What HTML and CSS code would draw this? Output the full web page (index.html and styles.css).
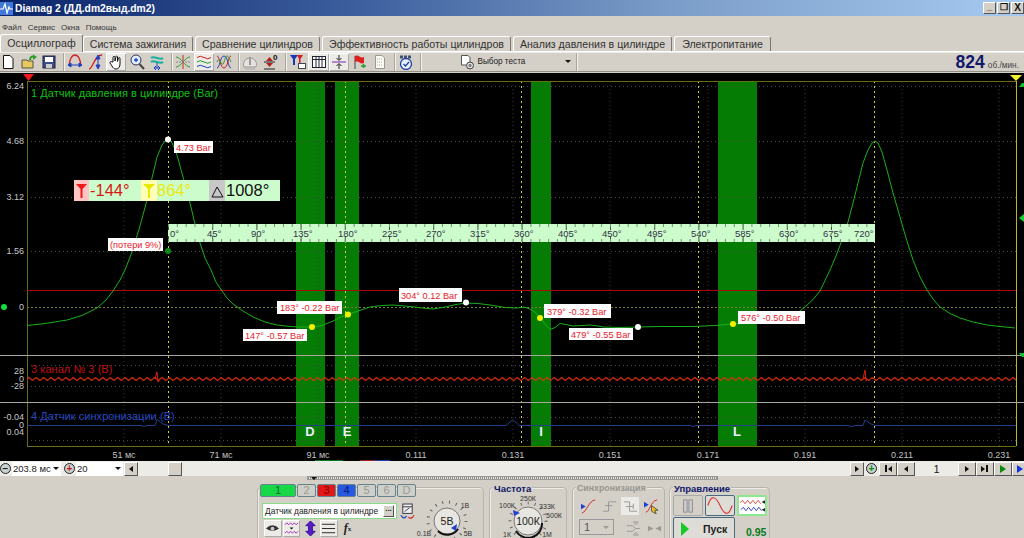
FILE: index.html
```html
<!DOCTYPE html>
<html lang="ru">
<head>
<meta charset="utf-8">
<title>Diamag 2</title>
<link rel="stylesheet" href="styles.css">
</head>
<body>
<div class="app">
  <header class="titlebar">
    <svg class="appicon" viewBox="0 0 13 13"><rect width="13" height="13" fill="#3f78d8"/><path d="M0 7H3L5 2 7 11 9 5 10 7H13" fill="none" stroke="#fff" stroke-width="1.2"/></svg>
    <span class="apptitle">Diamag 2 (ДД.dm2выд.dm2)</span>
    <div class="winbtns">
      <span class="winbtn">_</span><span class="winbtn">&#x2750;</span><span class="winbtn winx">X</span>
    </div>
  </header>
  <nav class="menubar"><span>Файл</span><span>Сервис</span><span>Окна</span><span>Помощь</span></nav>
  <div class="tabs">
    <span class="tab active t1">Осциллограф</span>
    <span class="tab t2">Система зажигания</span>
    <span class="tab t3">Сравнение цилиндров</span>
    <span class="tab t4">Эффективность работы цилиндров</span>
    <span class="tab t5">Анализ давления в цилиндре</span>
    <span class="tab t6">Электропитание</span>
  </div>
  <div class="toolbar">
    <span class="tb first"><svg viewBox="0 0 16 16"><path d="M3.500 1.500H10L13 4.500V14.500H3.500Z" fill="#fff" stroke="#111"/></svg></span>
    <span class="tb"><svg viewBox="0 0 16 16"><path d="M1 14V6H6L7 7H12V14Z" fill="#e8c860" stroke="#554"/><path d="M9 6C9 3 11 2 13 3" fill="none" stroke="#2a9a2a" stroke-width="2"/><path d="M12 .5L16 3 12 6Z" fill="#2a9a2a"/></svg></span>
    <span class="tb"><svg viewBox="0 0 16 16"><rect x="2" y="2" width="12" height="12" fill="#3a4a8a" stroke="#223"/><rect x="4" y="3" width="8" height="5" fill="#fff"/><rect x="5" y="10" width="6" height="4" fill="#ccc"/></svg></span>
    <i class="sep"></i>
    <span class="tb"><svg viewBox="0 0 16 16"><path d="M2 12C3 3 6 1 8 1S13 3 14 12" fill="none" stroke="#d02020" stroke-width="1.300"/><path d="M1 11H15M1 11L4 9V13ZM15 11L12 9V13Z" stroke="#2040c0" fill="#2040c0"/></svg></span>
    <span class="tb"><svg viewBox="0 0 16 16"><path d="M1 15C5 15 6 1 14 1" fill="none" stroke="#d02020" stroke-width="1.300"/><path d="M10 2V14M10 1L8 5H12ZM10 15L8 11H12Z" stroke="#2040c0" fill="#2040c0"/></svg></span>
    <span class="tb on"><svg viewBox="0 0 16 16"><path d="M5 8V3.500C5 2 7 2 7 3.500V7L8 2.500C8.500 1.500 9.500 2 9.500 3V7.500L10.500 4C11 3 12 3.500 12 4.500V10C12 13 10.500 15 8 15 6 15 5 14 4 12L2 9C1.500 8 3 7 4 8Z" fill="#fff" stroke="#111"/></svg></span>
    <span class="tb"><svg viewBox="0 0 16 16"><circle cx="7" cy="6" r="5" fill="#dfeeff" stroke="#335"/><path d="M5 6H9M7 4V8" stroke="#2040c0" stroke-width="1.300"/><path d="M10.500 10L15 15" stroke="#444" stroke-width="2"/></svg></span>
    <span class="tb"><svg viewBox="0 0 16 16"><path d="M2 4C5 1 11 7 14 4M2 8C5 5 11 11 14 8" fill="none" stroke="#18b0a0" stroke-width="2"/><path d="M8 9V14M5 14H11M5 14L7 12M5 14L7 16M11 14L9 12M11 14L9 16" stroke="#2040c0" fill="none"/></svg></span>
    <i class="sep"></i>
    <span class="tb"><svg viewBox="0 0 16 16"><path d="M1 3C6 3 10 13 15 13M1 13C6 13 10 3 15 3" fill="none" stroke="#2a9a2a"/><path d="M8 1V15" stroke="#c03020"/><path d="M1 8H15" stroke="#888" stroke-dasharray="2 1"/></svg></span>
    <span class="tb on"><svg viewBox="0 0 16 16"><path d="M1 3.500Q4 1 8 3.500T15 3.500" fill="none" stroke="#d02020"/><path d="M1 8Q4 5.500 8 8T15 8" fill="none" stroke="#2a9a2a"/><path d="M1 12.500Q4 10 8 12.500T15 12.500" fill="none" stroke="#2040c0"/></svg></span>
    <span class="tb"><svg viewBox="0 0 16 16"><path d="M1 14C4 14 4 2 8 2S12 14 15 14" fill="none" stroke="#2040c0"/><path d="M1 2C4 2 4 14 8 14S12 2 15 2" fill="none" stroke="#d02020"/><path d="M1 8C4 0 6 16 8 8S12 0 15 8" fill="none" stroke="#2a9a2a"/></svg></span>
    <i class="sep"></i>
    <span class="tb dim"><svg viewBox="0 0 16 16"><path d="M2 13A6.500 6.500 0 1 1 14 13Z" fill="#e4e2dc" stroke="#999"/><path d="M8 3V11" stroke="#999" stroke-width="2"/><path d="M3 15H13" stroke="#aaa"/></svg></span>
    <span class="tb"><svg viewBox="0 0 16 16"><path d="M1 8H12" stroke="#222"/><path d="M3 7L6.500 3 10 7ZM3 9H10L6.500 13Z" fill="#b02020"/><path d="M1 15H12" stroke="#222"/><text class="tbzero" x="10" y="6">0</text></svg></span>
    <i class="sep sepwide"></i>
    <span class="tb"><svg viewBox="0 0 16 16"><path d="M0 1H8L5 5V11H3V5Z" fill="#1838b8"/><path d="M7 1H13L10.500 5V9H9V5Z" fill="#d02020"/><rect x="8.500" y="9.500" width="7" height="5" fill="#fff" stroke="#445"/></svg></span>
    <span class="tb on"><svg viewBox="0 0 16 16"><rect x="1.500" y="2.500" width="13" height="11" fill="#fff" stroke="#223"/><path d="M1.500 5.500H14.500M5 2.500V13.500M8 2.500V13.500M11 2.500V13.500" stroke="#223"/></svg></span>
    <span class="tb on"><svg viewBox="0 0 16 16"><path d="M1 8H15" stroke="#8020b0"/><path d="M8 1V6M5.500 4L8 6.500 10.500 4M5.500 12L8 9.500 10.500 12M8 10V15" stroke="#222" fill="none"/></svg></span>
    <span class="tb"><svg viewBox="0 0 16 16"><path d="M4 2V15" stroke="#444"/><path d="M4 2C8 0 9 5 13 3V9C9 11 8 6 4 8Z" fill="#e02020"/><path d="M10 12H15M12.500 10V14" stroke="#2a9a2a" stroke-width="1.500"/></svg></span>
    <span class="tb dimdoc"><svg viewBox="0 0 16 16"><path d="M3.500 1.500H10L12.500 4V14.500H3.500Z" fill="#fbfbf4" stroke="#999"/><path d="M5 5H10M5 8H11M5 11H10" stroke="#aaa" stroke-dasharray="1 1"/></svg></span>
    <i class="sep"></i>
    <span class="tb"><svg viewBox="0 0 16 16"><circle cx="8" cy="10" r="5.500" fill="#e6f0ff" stroke="#2040a0" stroke-width="1.300"/><path d="M5.500 10L7.500 12 11 8" fill="none" stroke="#2040a0" stroke-width="1.300"/><path d="M2 3H14" stroke="#405070" stroke-width="3" stroke-dasharray="3 1"/></svg></span>
    <i class="sep"></i>
    <div class="testsel">
      <svg class="docgear" viewBox="0 0 16 16"><path d="M2.500 1.500H9L11 3.500V11H2.500Z" fill="#fff" stroke="#555"/><circle cx="11" cy="11.500" r="3.500" fill="#ddd" stroke="#444"/><circle cx="11" cy="11.500" r="1" fill="#fff" stroke="#444"/></svg>
      <span>Выбор теста</span>
      <i class="caret"></i>
    </div>
    <i class="sep"></i>
    <div class="rpm"><b>824</b><span>об./мин.</span></div>
  </div>

  <svg class="plot" viewBox="0 73 1024 388" aria-label="Осциллограмма">
    <defs>
      <pattern id="zig" patternUnits="userSpaceOnUse" x="27" y="376" width="7.400" height="6">
        <path d="M0 3 1.800 1.500 3.700 3 5.500 4.500 7.400 3" fill="none" stroke="#e03010"/>
      </pattern>
    </defs>
    <rect x="0" y="73" width="1024" height="388" fill="#000"/>

    <rect class="zone" x="296" y="81" width="29" height="365"/>
    <rect class="zone" x="335" y="81" width="24" height="365"/>
    <rect class="zone" x="531" y="81" width="20" height="365"/>
    <rect class="zone" x="718" y="81" width="39" height="365"/>

    <path class="gridv" d="M124 81V446M221 81V446M318 81V446M416 81V446M513 81V446M610 81V446M708 81V446M805 81V446M902 81V446M999 81V446"/>
    <path class="gridh" d="M27 86.500H1016M27 141.500H1016M27 197.500H1016M27 251.500H1016M27 365.500H1016M27 386.500H1016M27 417.500H1016M27 440.500H1016"/>
    <path class="gridz" d="M27 307.500H1016"/>
    <path class="cursor" d="M168.500 81V446M345.500 81V446M521.500 81V446M698.500 81V446M874.500 81V446"/>

    <path class="frame" d="M27.500 81V446M27 81.500H1016M27 446.500H1016"/>
    <path class="frame-r" d="M1016.500 81V446"/>
    <path class="redline" d="M27 290.500H1016"/>
    <path class="sepline" d="M0 355.500H1024M0 402.500H1024"/>

    <rect x="27" y="376" width="989" height="6" fill="url(#zig)"/>
    <path class="redtrace" d="M155 379 157 372 158 382 160 379M863 379 865 370 866 381 868 379"/>
    <path class="bluetrace" d="M27 425.500H141L144 426.500 147 425.500H155L157 419.500 163 424 168 425.500H506L513 419.500 519 425.500H690L693 426.500 696 425.500H848L851 426.500 856 425.500H863L865 420 871 424 875 425.500H1016"/>
    <polyline class="curve" points="27,325.500 45,323.500 67,320 82,315.500 97,308 106,300 113,291 120,280 125,270 132,252 140,226 147,200 152,178 157,157 162,145 165,141 168,139.500 171,141 174,147 177,155 183,177 190,203 195,224 200,243 205,258 211,270 216,282 222,291 227,298 233,304 243,311 253,317 265,322 277,325 290,326.500 300,327 312,327 322,325.500 333,321 341,317 348,314.500 358,311 370,307 382,305.500 393,305 410,306.500 422,308 433,309 445,307 456,304.500 466,303 478,303.500 490,305 505,307.500 517,308 524,307 530,309 535,312 540,318 545,324 550,329.500 555,327.500 560,323.500 566,324.500 573,326 582,325.500 590,325 598,326 603,327 620,327.500 638,327 660,326.500 693,326.500 715,325.500 733,324 757,322.500 775,320 790,316 800,311 806,306 813,299.500 820,291 830,270 836,256 842,240 848,222 853,203 858,183 863,163 868,150 872,143 875,141 878,143 882,152 887,170 893,193 900,217 906,238 913,260 920,277 927,290 933,299 940,307 950,313.500 960,318 973,322 987,325 1000,326.500 1015,328"/>

    <rect class="strip" x="168" y="224" width="707" height="18"/>
    <path class="stripmaj" d="M168.500 224V230M168.500 236V242M212.700 224V230M212.700 236V242M256.900 224V230M256.900 236V242M301.100 224V230M301.100 236V242M345.300 224V230M345.300 236V242M389.500 224V230M389.500 236V242M433.700 224V230M433.700 236V242M477.900 224V230M477.900 236V242M522.100 224V230M522.100 236V242M566.300 224V230M566.300 236V242M610.500 224V230M610.500 236V242M654.700 224V230M654.700 236V242M698.900 224V230M698.900 236V242M743.100 224V230M743.100 236V242M787.300 224V230M787.300 236V242M831.500 224V230M831.500 236V242"/>
    <path class="stripmin" d="M168 225.500H875M168 240.500H875"/>
    <g class="striptext">
      <text x="170" y="236.500">0°</text>
      <text x="207" y="236.500">45°</text>
      <text x="251" y="236.500">90°</text>
      <text x="293" y="236.500">135°</text>
      <text x="338" y="236.500">180°</text>
      <text x="382" y="236.500">225°</text>
      <text x="426" y="236.500">270°</text>
      <text x="470" y="236.500">315°</text>
      <text x="514" y="236.500">360°</text>
      <text x="558" y="236.500">405°</text>
      <text x="602" y="236.500">450°</text>
      <text x="647" y="236.500">495°</text>
      <text x="691" y="236.500">540°</text>
      <text x="735" y="236.500">585°</text>
      <text x="779" y="236.500">630°</text>
      <text x="823" y="236.500">675°</text>
      <text x="854" y="236.500">720°</text>
    </g>

    <rect class="strip2" x="74" y="180" width="206" height="21"/>
    <rect x="74" y="180" width="15" height="21" fill="#ffc4c4"/>
    <path d="M76 184H87L82.500 189V198H80.500V189Z" fill="#f01818"/>
    <text class="dbig dred" x="90" y="196">-144°</text>
    <rect x="141" y="180" width="16" height="21" fill="#ffffb8"/>
    <path d="M143 184H155L150 189V198H148V189Z" fill="#e8e800"/>
    <text class="dbig dyel" x="157" y="196">864°</text>
    <rect x="209" y="180" width="16" height="21" fill="#c8c8c8"/>
    <path d="M217 187 223 197H212Z" fill="none" stroke="#111"/>
    <text class="dbig" x="226" y="196">1008°</text>

    <g class="lbls">
      <rect x="174" y="141" width="39" height="12"/><text x="176" y="150.500">4.73 Bar</text>
      <rect x="108" y="238" width="55" height="13"/><text x="110" y="248">(потери 9%)</text>
      <rect x="277" y="301" width="65" height="13"/><text x="280" y="311">183° -0.22 Bar</text>
      <rect x="243" y="329" width="64" height="12"/><text x="245" y="338.500">147° -0.57 Bar</text>
      <rect x="399" y="288" width="63" height="14"/><text x="401" y="298.500">304° 0.12 Bar</text>
      <rect x="544" y="304" width="67" height="14"/><text x="547" y="314.500">379° -0.32 Bar</text>
      <rect x="569" y="328" width="64" height="12"/><text x="571" y="337.500">479° -0.55 Bar</text>
      <rect x="738" y="311" width="67" height="13"/><text x="741" y="321">576° -0.50 Bar</text>
    </g>

    <circle class="pw" cx="168" cy="139.500" r="3"/>
    <circle cx="168" cy="251" r="3" fill="#0a8a1a"/>
    <circle class="py" cx="312" cy="327" r="3"/>
    <circle class="py" cx="348" cy="314.500" r="3"/>
    <circle class="pw" cx="466" cy="302.500" r="3"/>
    <circle class="py" cx="540" cy="318" r="3"/>
    <circle class="pw" cx="638" cy="327" r="3"/>
    <circle class="py" cx="733" cy="324" r="3"/>

    <text class="ch ch1" x="31" y="97">1 Датчик давления в цилиндре (Bar)</text>
    <text class="ch ch3" x="31" y="373">3 канал № 3 (В)</text>
    <text class="ch ch4" x="31" y="420">4 Датчик синхронизации (В)</text>

    <g class="yax">
      <text x="24" y="89">6.24</text><text x="24" y="144">4.68</text><text x="24" y="200">3.12</text><text x="24" y="254">1.56</text><text x="24" y="310">0</text>
      <text x="24" y="374">28</text><text x="24" y="382">0</text><text x="24" y="389">-28</text>
      <text x="24" y="420">-0.04</text><text x="24" y="428">0</text><text x="24" y="435">0.04</text>
    </g>
    <g class="xax">
      <text x="124" y="458">51 мс</text><text x="221" y="458">71 мс</text><text x="318" y="458">91 мс</text><text x="416" y="458">0.111</text><text x="513" y="458">0.131</text><text x="610" y="458">0.151</text><text x="708" y="458">0.171</text><text x="805" y="458">0.191</text><text x="902" y="458">0.211</text><text x="999" y="458">0.231</text>
    </g>
    <g class="zl">
      <text x="310" y="436">D</text><text x="347" y="436">E</text><text x="541" y="436">I</text><text x="737" y="436">L</text>
    </g>

    <path d="M23 74H34L28.500 81Z" fill="#f01818"/>
    <path d="M1010 75H1022L1016 81Z" fill="#f0f030"/>
    <circle cx="4" cy="307" r="3" fill="#10e040"/>
    <path d="M1019 87 1022 83 1024 83V87Z" fill="#10c030"/>
    <path d="M1019 218 1024 214V222Z" fill="#10d030"/>
    <path d="M1019 353H1024V357L1022 357Z" fill="#10c030"/>
    <path d="M315 460.500H343" stroke="#0a7a1a"/>
    <path d="M360 460.500H375" stroke="#a02020"/>
    <path d="M375 460.500H390" stroke="#2040a0"/>
  </svg>

  <div class="scrollrow">
    <span class="circ">&#8722;</span>
    <span class="combo c1">203.8 мс<i class="caret"></i></span>
    <span class="circ plus">+</span>
    <span class="combo c2">20<i class="caret"></i></span>
    <span class="sb sbl"><i class="tri-l"></i></span>
    <div class="track"><span class="thumb"></span></div>
    <span class="sb"><i class="tri-r"></i></span>
    <span class="circ plusg">+</span>
    <span class="nav"><i class="bar"></i><i class="tri-l"></i></span>
    <span class="nav"><i class="tri-l"></i></span>
    <span class="pageno">1</span>
    <span class="nav"><i class="tri-r"></i></span>
    <span class="nav"><i class="tri-r"></i><i class="bar"></i></span>
    <span class="nav"><i class="tri-r tgreen"></i></span>
    <span class="nav navlast"><i class="tri-r tblue"></i></span>
  </div>

  <div class="panel">
    <div class="splitter"><i class="caret"></i></div>
    <div class="groups">
      <section class="group g1">
        <div class="g1col">
          <div class="chbtns">
            <span class="chb cgreen">1</span><span class="chb">2</span><span class="chb cred">3</span><span class="chb cblue">4</span><span class="chb">5</span><span class="chb">6</span><span class="chb">D</span>
          </div>
          <div class="namerow">
            <div class="namefield"><span>Датчик давления в цилиндре</span><b class="dots">...</b></div>
            <svg class="swap" viewBox="0 0 16 18"><rect x="3" y="1" width="10" height="10" fill="#eee" stroke="#334"/><path d="M3 4H13M5 9L10 5" stroke="#334"/><path d="M1 13Q4 18 7 14" fill="none" stroke="#2040c0" stroke-width="1.300"/><path d="M15 13Q12 18 9 15" fill="none" stroke="#d02020" stroke-width="1.300"/></svg>
          </div>
          <div class="chtools">
            <span class="ct on"><svg viewBox="0 0 16 16"><path d="M1 8Q8 1 15 8 8 13 1 8Z" fill="#333"/><circle cx="8" cy="8" r="2" fill="#ccc"/></svg></span>
            <span class="ct on"><svg viewBox="0 0 16 16"><path d="M1 4 3 2 5 4 7 2 9 4 11 2 13 4 15 2M1 13 3 11 5 13 7 11 9 13 11 11 13 13 15 11" fill="none" stroke="#a020c0"/><path d="M6 7H10L8 9Z" fill="#111"/></svg></span>
            <span class="ct"><svg viewBox="0 0 16 16"><path d="M8 0 13 5H10V11H13L8 16 3 11H6V5H3Z" fill="#6018c0" stroke="#20109a"/></svg></span>
            <span class="ct on"><svg viewBox="0 0 16 16"><path d="M1 3.500H15M1 8H15M1 12.500H15" stroke="#222"/></svg></span>
            <span class="ct fx"><em>f</em><small>x</small></span>
          </div>
        </div>
        <svg class="knob kv" viewBox="0 0 70 50">
          <circle class="kticks" cx="35" cy="22" r="19"/>
          <circle class="kdial" cx="35" cy="22" r="13"/>
          <path d="M26 32A13 13 0 0 0 46 30" fill="none" stroke="#111" stroke-width="2"/>
          <path d="M39 29 45 25 44 32Z" fill="#2040d0"/>
          <text class="ktext" x="35" y="26">5В</text>
          <text class="ksmall" x="53" y="9">1В</text>
          <text class="ksmall" x="56" y="37">5В</text>
          <text class="ksmall" x="12" y="37">0.1В</text>
        </svg>
      </section>
      <section class="group g2">
        <h3 class="gt">Частота</h3>
        <svg class="knob kf" viewBox="0 0 76 50">
          <circle class="kticks" cx="37" cy="27" r="18"/>
          <circle class="kdial" cx="37" cy="27" r="14"/>
          <path d="M25 37A14 14 0 0 0 51 29" fill="none" stroke="#111" stroke-width="2"/>
          <path d="M22 16 29 19 23 22Z" fill="#2040d0"/>
          <text class="ktext" x="37" y="31">100К</text>
          <text class="ksmall" x="16" y="14">100К</text>
          <text class="ksmall" x="37" y="7">250К</text>
          <text class="ksmall" x="56" y="15">333К</text>
          <text class="ksmall" x="63" y="24">500К</text>
          <text class="ksmall" x="16" y="43">1К</text>
          <text class="ksmall" x="56" y="43">1М</text>
        </svg>
      </section>
      <section class="group g3">
        <h3 class="gt gdim">Синхронизация</h3>
        <div class="syncrow">
          <span class="sy"><svg viewBox="0 0 16 16"><path d="M1 15C6 14 8 2 15 1" fill="none" stroke="#d02020"/><path d="M0 5 5 8 0 11Z" fill="#2040d0"/></svg></span>
          <span class="sy"><svg viewBox="0 0 16 16"><path d="M1 13H7V3H15M3 7H11M7 4V11" fill="none" stroke="#999"/></svg></span>
          <span class="sy syon"><svg viewBox="0 0 16 16"><path d="M1 3H7V13H15M3 8H11M11 5V11" fill="none" stroke="#999"/></svg></span>
          <span class="sy"><svg viewBox="0 0 16 16"><path d="M2 14C6 14 7 2 14 1" fill="none" stroke="#d02020"/><path d="M0 3 5 6 0 9Z" fill="#2040d0"/><path d="M8 7 15 12 11.500 12 13 16 8 13Z" fill="#f0c020" stroke="#554"/></svg></span>
        </div>
        <div class="syncrow sr2">
          <span class="dimsel">1<i class="caret"></i></span>
          <span class="sy"><svg viewBox="0 0 16 16"><path d="M1 5H7L10 8H15M1 11H7L10 8M8 1H13L10.500 4ZM8 15H13L10.500 12Z" fill="none" stroke="#999"/></svg></span>
          <span class="sy"><svg viewBox="0 0 16 16"><path d="M1 5 7 8 1 11ZM15 5 9 8 15 11Z" fill="#999"/></svg></span>
        </div>
      </section>
      <section class="group g4">
        <h3 class="gt">Управление</h3>
        <div class="ctlrow">
          <span class="cbtn"><svg viewBox="0 0 16 16"><rect x="3" y="1" width="4" height="14" fill="#ccc" stroke="#888"/><rect x="9" y="1" width="4" height="14" fill="#ccc" stroke="#888"/></svg></span>
          <span class="cbtn cbon"><svg viewBox="0 0 30 18" class="sine"><path d="M1 9C5 -4 10 -2 15 9S25 22 29 9" fill="none" stroke="#d83838" stroke-width="1.300"/></svg></span>
          <span class="cbtn cbw"><svg viewBox="0 0 30 18" class="sine"><path d="M1 6 4 3 7 7 10 3 13 7 16 3 19 7 22 3 25 7" fill="none" stroke="#d83838"/><path d="M2 14 5 11 8 15 11 11 14 15 17 11 20 15 23 11 26 15" fill="none" stroke="#2030c0"/><path d="M30 3V7L26 5ZM30 12V16L26 14Z" fill="#223"/></svg></span>
        </div>
        <div class="ctlrow cr2">
          <span class="run"><i class="playi"></i><b>Пуск</b></span>
          <b class="val">0.95</b>
        </div>
      </section>
    </div>
  </div>
</div>
</body>
</html>
```

FILE: styles.css
```css
* { box-sizing: border-box; }
html, body { margin: 0; padding: 0; background: #d4d0c8; }
body { font-family: "Liberation Sans", Arial, sans-serif; color: #222; }
.app { width: 1024px; height: 538px; overflow: hidden; display: flex; flex-direction: column; }

.titlebar { height: 16px; flex: none; display: flex; align-items: center; background: linear-gradient(90deg, #0a246a 0%, #3d5f9e 35%, #7a9cc8 65%, #a6caf0 100%); color: #fff; }
.appicon { width: 13px; height: 13px; flex: none; }
.apptitle { margin-left: 2px; font: bold 10.300px "Liberation Sans", sans-serif; white-space: nowrap; }
.winbtns { margin-left: auto; display: flex; gap: 1px; }
.winbtn { width: 13px; height: 12px; background: #d4d0c8; border: 1px solid; border-color: #fff #555 #555 #fff; color: #111; font: bold 9px/9px "Liberation Sans", sans-serif; text-align: center; overflow: hidden; }
.winx { font-size: 10px; }

.menubar { height: 20px; flex: none; display: flex; align-items: center; padding-left: 2px; padding-top: 2px; font-size: 8px; gap: 6px; color: #333; }

.tabs { height: 16px; flex: none; display: flex; align-items: flex-end; border-bottom: 1px solid #fff; font-size: 10.600px; color: #333; }
.tab { height: 15px; display: flex; align-items: center; justify-content: center; background: #d4d0c8; border: 1px solid #b0aca4; border-bottom: 0; border-right-color: #777; border-radius: 3px 3px 0 0; border-top-color: #fff; border-left-color: #fff; white-space: nowrap; margin-right: 2px; flex: none; }
.active { height: 18px; margin-bottom: -1px; margin-right: 0; padding-bottom: 2px; }
.t1 { width: 83px; }
.t2 { width: 110px; }
.t3 { width: 125px; }
.t4 { width: 189px; }
.t5 { width: 159px; }
.t6 { width: 97px; }

.toolbar { height: 20px; flex: none; display: flex; align-items: center; border-bottom: 1px solid #8f8c85; box-shadow: inset 0 1px 0 #efede8; }
.tb { width: 20.400px; height: 18px; flex: none; display: flex; align-items: center; justify-content: center; }
.tb.first { margin-left: -2px; }
.tb svg { width: 16px; height: 16px; }
.tb.on { background: #ecebe6; box-shadow: inset 1px 1px 0 #fff, inset -1px -1px 0 #aaa; }
.sep { width: 1px; height: 18px; margin: 0 1.500px 0 3.500px; background: #a8a59d; box-shadow: 1px 0 0 #f4f2ee; flex: none; }
.sepwide { margin-right: 2.500px; }
.tbzero { font: bold 8px "Liberation Sans", sans-serif; fill: #111; }
.testsel { width: 113px; margin-left: 37px; flex: none; display: flex; align-items: center; font-size: 8.200px; color: #222; white-space: nowrap; }
.docgear { width: 16px; height: 16px; margin-right: 2px; flex: none; }
.caret { display: inline-block; width: 0; height: 0; flex: none; border-left: 3px solid transparent; border-right: 3px solid transparent; border-top: 3px solid #111; }
.testsel .caret { margin-left: 40px; }
.rpm { margin-left: auto; padding-right: 5px; display: flex; align-items: baseline; color: #444; }
.rpm b { font-size: 17.500px; line-height: 18px; color: #10186a; }
.rpm span { font-size: 8.300px; margin-left: 3px; }

.plot { display: block; width: 1024px; height: 388px; flex: none; margin-top: 1px; }
.zone { fill: #057d05; }
.gridv { stroke: #3a3a3a; stroke-dasharray: 1 3; fill: none; }
.gridh { stroke: #484848; stroke-dasharray: 1 3; fill: none; }
.gridz { stroke: #7a7a30; stroke-dasharray: 2 2; fill: none; }
.cursor { stroke: #d8d030; stroke-dasharray: 2 3; fill: none; }
.frame { stroke: #6a6e10; fill: none; }
.frame-r { stroke: #b8b820; fill: none; }
.redline { stroke: #a80808; fill: none; }
.sepline { stroke: #a8a8a0; fill: none; }
.redtrace { stroke: #e02010; fill: none; }
.bluetrace { stroke: #25408a; fill: none; }
.curve { fill: none; stroke: #18b018; stroke-width: 1; stroke-linejoin: round; }
.strip { fill: #ccfccc; }
.strip2 { fill: #ccfccc; }
.stripmaj { stroke: #445544; fill: none; }
.stripmin { stroke: #7a907a; stroke-width: 3; stroke-dasharray: 1 7.840; fill: none; }
.striptext text { font: 9.500px "Liberation Sans", sans-serif; fill: #334; }
.dbig { font: 16.500px "Liberation Sans", sans-serif; fill: #111; }
.dred { fill: #d81818; }
.dyel { fill: #eaea10; }
.lbls rect { fill: #fff; }
.lbls text { font: 9.200px "Liberation Sans", sans-serif; fill: #e81828; }
.pw { fill: #fff; }
.py { fill: #f4f000; }
.ch { font: 11px "Liberation Sans", sans-serif; letter-spacing: .05px; }
.ch1 { fill: #10c010; }
.ch3 { fill: #c01010; }
.ch4 { fill: #2848c0; }
.yax text { font: 9px "Liberation Sans", sans-serif; fill: #c8c8c8; text-anchor: end; }
.xax text { font: 9px "Liberation Sans", sans-serif; fill: #c0c0c0; text-anchor: middle; }
.zl text { font: bold 13px "Liberation Sans", sans-serif; fill: #eef; text-anchor: middle; }

.scrollrow { height: 15px; flex: none; display: flex; align-items: center; background: #ecebe6; font-size: 9px; }
.circ { width: 11px; height: 11px; margin: 0 1px 0 0; flex: none; border-radius: 50%; border: 1px solid #222; background: #c8d0d0; display: flex; align-items: center; justify-content: center; font: bold 10px/9px "Liberation Sans", sans-serif; color: #222; }
.plus { margin-left: 3px; color: #c01818; }
.plusg { color: #0a8a0a; margin: 0 2px; }
.combo { height: 14px; background: #fff; display: flex; align-items: center; justify-content: space-between; padding: 0 2px 0 1px; font-size: 9.500px; flex: none; }
.c1 { width: 49px; }
.c2 { width: 47px; }
.sb { width: 14px; height: 14px; flex: none; background: #d4d0c8; border: 1px solid; border-color: #fff #555 #555 #fff; display: flex; align-items: center; justify-content: center; }
.sbl { margin-left: 1px; }
.track { width: 712px; height: 14px; flex: none; display: flex; padding-left: 30px; }
.thumb { width: 14px; height: 14px; background: #d4d0c8; border: 1px solid; border-color: #fff #555 #555 #fff; }
.tri-l { width: 0; height: 0; border-top: 3px solid transparent; border-bottom: 3px solid transparent; border-right: 4px solid #111; }
.tri-r { width: 0; height: 0; border-top: 3px solid transparent; border-bottom: 3px solid transparent; border-left: 4px solid #111; }
.tgreen { border-left-color: #0a8a0a; border-top-width: 4px; border-bottom-width: 4px; border-left-width: 6px; }
.tblue { border-left-color: #1030e0; border-top-width: 4px; border-bottom-width: 4px; border-left-width: 6px; }
.bar { width: 2px; height: 7px; background: #111; margin: 0 1px; }
.nav { width: 18px; height: 14px; flex: none; background: #d4d0c8; border: 1px solid; border-color: #fff #555 #555 #fff; display: flex; align-items: center; justify-content: center; }
.navlast { width: 15px; }
.pageno { width: 43px; flex: none; text-align: center; font-size: 11px; }

.panel { flex: 1; min-height: 0; display: flex; flex-direction: column; overflow: hidden; }
.splitter { flex: none; width: 411px; height: 4px; margin-left: 307px; background: repeating-linear-gradient(90deg, #8f8c85 0 1px, #e6e4de 1px 2px); border: 1px solid #999; display: flex; align-items: center; padding-left: 3px; }
.groups { display: flex; margin: 7px 0 0 257px; height: 70px; flex: none; }
.group { position: relative; border: 1px solid #b8b5ae; border-radius: 4px; box-shadow: inset 1px 1px 0 #eeece6; height: 70px; flex: none; }
.gt { position: absolute; left: 3px; top: -5px; margin: 0; padding: 0 1px; background: #d4d0c8; font: bold 9.500px/11px "Liberation Sans", sans-serif; color: #10186a; white-space: nowrap; }
.gdim { color: #989690; font-size: 8.800px; }

.g1 { width: 227px; margin-right: 5px; display: flex; }
.g1col { margin: -4px 0 0 2px; width: 155px; flex: none; }
.chbtns { display: flex; gap: 1px; height: 13px; }
.chb { width: 19px; height: 13px; border: 1px solid #66828c; border-radius: 2px; background: #cfcfc9; color: #9a9a94; font-size: 11px; line-height: 11px; text-align: center; flex: none; }
.cgreen { width: 36px; background: #18d848; color: #063; }
.cred { background: #e01818; color: #800; }
.cblue { background: #2858e0; color: #012080; }
.namerow { display: flex; margin: 6px 0 0 2px; gap: 3px; align-items: center; height: 16px; }
.namefield { width: 135px; height: 16px; flex: none; background: #fff; border: 1px solid #88dd88; display: flex; align-items: center; justify-content: space-between; padding: 0 2px; font-size: 8.400px; white-space: nowrap; }
.dots { width: 11px; height: 12px; background: #d4d0c8; border: 1px solid; border-color: #fff #555 #555 #fff; font-size: 8px; line-height: 6px; text-align: center; }
.swap { width: 15px; height: 17px; flex: none; }
.chtools { display: flex; margin: 1px 0 0 4px; gap: 1px; }
.ct { width: 17.700px; height: 17px; display: flex; align-items: center; justify-content: center; flex: none; }
.ct svg { width: 15px; height: 15px; }
.ct.on { background: #ecebe6; border: 1px solid; border-color: #fff #aaa #aaa #fff; }
.fx { font: bold 12px "Liberation Serif", serif; }
.fx small { font-size: 7px; }
.knob { flex: none; display: block; }
.kv { width: 70px; height: 50px; margin: 11px 0 0 -3px; }
.kf { width: 76px; height: 50px; margin: 6px 0 0 1px; }
.kticks { fill: none; stroke: #666; stroke-width: 3; stroke-dasharray: 1 6; }
.kdial { fill: #e8e6e0; stroke: #777; }
.ktext { font: 10.500px "Liberation Sans", sans-serif; fill: #222; text-anchor: middle; }
.ksmall { font: 7px "Liberation Sans", sans-serif; fill: #333; text-anchor: middle; }

.g2 { width: 78px; margin-right: 5px; }
.g3 { width: 93px; margin-right: 4px; }
.syncrow { display: flex; gap: 3px; margin: 9px 0 0 6px; }
.sy { width: 18px; height: 18px; display: flex; align-items: center; justify-content: center; flex: none; }
.sy svg { width: 15px; height: 15px; }
.syon { background: #eceae6; }
.sr2 { margin-top: 4px; gap: 3px; }
.dimsel { width: 35px; height: 16px; border: 1px solid #999; display: flex; align-items: center; justify-content: space-between; padding: 0 4px; font-size: 11px; color: #555; margin-right: 7px; flex: none; }
.dimsel .caret { border-top-color: #999; }

.g4 { width: 101px; }
.ctlrow { display: flex; gap: 2px; margin: 7px 0 0 3px; }
.cbtn { width: 30px; height: 21px; display: flex; align-items: center; justify-content: center; border: 1px solid #aaa; border-radius: 2px; flex: none; }
.cbtn svg { width: 14px; height: 14px; }
.cbtn .sine { width: 26px; height: 17px; }
.cbon { border-color: #4a6a80; background: #dedcd6; }
.cbw { background: #fff; border: 2px solid #8ce88c; }
.cr2 { margin-top: 1px; align-items: flex-start; gap: 11px; }
.run { width: 62px; height: 24px; border: 1px solid #4a6a80; border-radius: 2px; background: #dedcd6; display: flex; align-items: center; padding-left: 7px; gap: 14px; font-size: 10.500px; flex: none; }
.playi { width: 0; height: 0; border-top: 7px solid transparent; border-bottom: 7px solid transparent; border-left: 8px solid #18c828; }
.val { font-size: 10.500px; color: #0a7a20; margin-top: 9px; }
```
